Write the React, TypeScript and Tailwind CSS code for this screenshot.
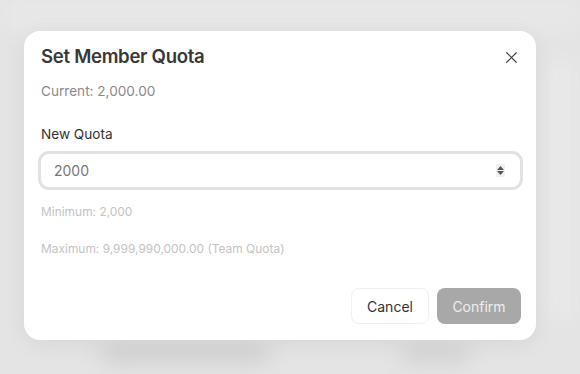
import { X } from "lucide-react";

export default function App() {
  return (
    <div
      className="relative w-[580px] h-[374px] overflow-hidden bg-[#e4e4e4]"
      style={{ fontFamily: "Inter, 'Noto Sans', sans-serif" }}
    >
      {/* blurred page behind the overlay */}
      <div className="absolute inset-0 blur-[10px]">
        <div className="absolute left-0 top-0 w-[580px] h-[30px] bg-[#e8e8e8]" />
        <div className="absolute left-[100px] top-[345px] w-[170px] h-[18px] rounded-full bg-[#cfcfcf]" />
        <div className="absolute left-[400px] top-[345px] w-[70px] h-[18px] rounded-full bg-[#d2d2d2]" />
        <div className="absolute left-[545px] top-[60px] w-[30px] h-[260px] bg-[#e9e9e9]" />
      </div>

      {/* DIALOG */}
      <div className="absolute left-[24px] top-[31px] w-[512px] h-[309px] rounded-[16px] bg-white shadow-[0_4px_24px_rgba(0,0,0,0.06)] pl-[17px] pr-[15px] pt-[12px] pb-[16px] flex flex-col">
        <div className="flex items-center justify-between h-[28px]">
          <h2 className="text-[18.6px] font-semibold tracking-[-0.3px] text-[#383838]">Set Member Quota</h2>
          <X className="w-[19px] h-[19px] text-[#444]" strokeWidth={1.5} />
        </div>

        <p className="mt-[10px] text-[13.6px] leading-[20px] text-[#8a8a8a]">Current: 2,000.00</p>

        <label className="mt-[23px] text-[13.6px] leading-[20px] text-[#333]">New Quota</label>

        <div className="mt-[7px] -ml-[3px] -mr-[2px] h-[39px] rounded-[11px] border-[3px] border-[#e2e2e2] flex items-center pl-[13px] pr-[15px]">
          <span className="flex-1 text-[14px] text-[#777]">2000</span>
          <div className="w-[9px] h-[13px] bg-[#f0f0f0] flex flex-col items-center justify-center gap-[1px]">
            <svg width="7" height="4" viewBox="0 0 7 4"><path d="M3.5 0L7 4H0z" fill="#555" /></svg>
            <svg width="7" height="4" viewBox="0 0 7 4"><path d="M0 0H7L3.5 4z" fill="#555" /></svg>
          </div>
        </div>

        <p className="mt-[14px] text-[11.95px] leading-[16px] text-[#c4c4c4]">Minimum: 2,000</p>
        <p className="mt-[21px] text-[11.95px] leading-[16px] text-[#c4c4c4]">Maximum: 9,999,990,000.00 (Team Quota)</p>

        <div className="mt-auto flex justify-end gap-[8px]">
          <button className="h-[36px] w-[78px] rounded-[8px] border border-[#efefef] bg-white text-[14px] text-[#333]">
            Cancel
          </button>
          <button className="h-[36px] w-[84px] rounded-[8px] bg-[#a8a8a8] text-[14px] text-[#eeeeee]">
            Confirm
          </button>
        </div>
      </div>
    </div>
  );
}
